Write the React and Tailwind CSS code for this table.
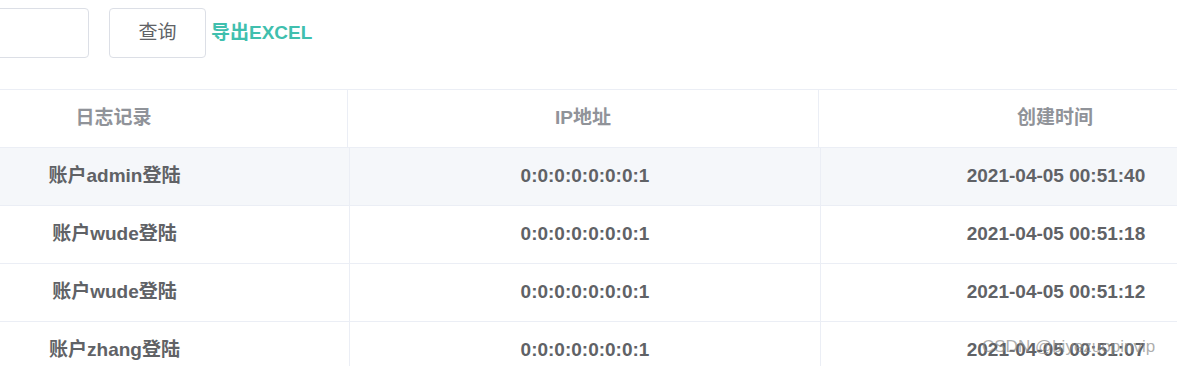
const ROWS = [
  { log: '账户admin登陆', ip: '0:0:0:0:0:0:0:1', time: '2021-04-05 00:51:40' },
  { log: '账户wude登陆', ip: '0:0:0:0:0:0:0:1', time: '2021-04-05 00:51:18' },
  { log: '账户wude登陆', ip: '0:0:0:0:0:0:0:1', time: '2021-04-05 00:51:12' },
  { log: '账户zhang登陆', ip: '0:0:0:0:0:0:0:1', time: '2021-04-05 00:51:07' },
];

const FONT = "font-['Liberation_Sans','Noto_Sans_CJK_SC',sans-serif]";

export default function App() {
  return (
    <div className={`relative h-[366px] w-[1177px] overflow-hidden bg-white ${FONT}`}>
      <div className="-ml-[120px] w-[1411px]">
        <div className="flex items-center pt-2 pl-[9px]">
          <div className="h-[50px] w-[200px] rounded-[4px] border border-[#dcdfe6] bg-white" />
          <button className="ml-[20px] h-[50px] w-[97px] rounded-[4px] border border-[#dcdfe6] bg-white text-[19px] text-[#606266]">
            查询
          </button>
          <span className="ml-[5px] text-[19px] font-bold text-[#40bfae]">导出EXCEL</span>
        </div>

        <div className="mt-[31px] border-t border-[#ebeef5]">
          <div className="grid grid-cols-[468px_471px_472px] border-b border-[#ebeef5]">
            {['日志记录', 'IP地址', '创建时间'].map((h, i) => (
              <div
                key={h}
                className={`flex h-[57px] items-center justify-center text-[19px] font-bold text-[#909399] ${i < 2 ? 'border-r border-[#ebeef5]' : ''}`}
              >
                {h}
              </div>
            ))}
          </div>

          {ROWS.map((row, idx) => (
            <div
              key={idx}
              className={`grid grid-cols-[470px_471px_470px] border-b border-[#ebeef5] ${idx === 0 ? 'bg-[#f5f7fa]' : 'bg-white'}`}
            >
              <div className="flex h-[57px] items-center justify-center border-r border-[#ebeef5] text-[19px] font-bold text-[#606266]">
                {row.log}
              </div>
              <div className="flex h-[57px] items-center justify-center border-r border-[#ebeef5] text-[19px] font-bold text-[#606266]">
                {row.ip}
              </div>
              <div className="flex h-[57px] items-center justify-center text-[19px] font-bold text-[#606266]">
                {row.time}
              </div>
            </div>
          ))}
        </div>
      </div>

      <span className="absolute left-[982px] top-[334px] text-[17px] text-[#8a8a8a]/70">
        CSDN @biyezuopinvip
      </span>
    </div>
  );
}
